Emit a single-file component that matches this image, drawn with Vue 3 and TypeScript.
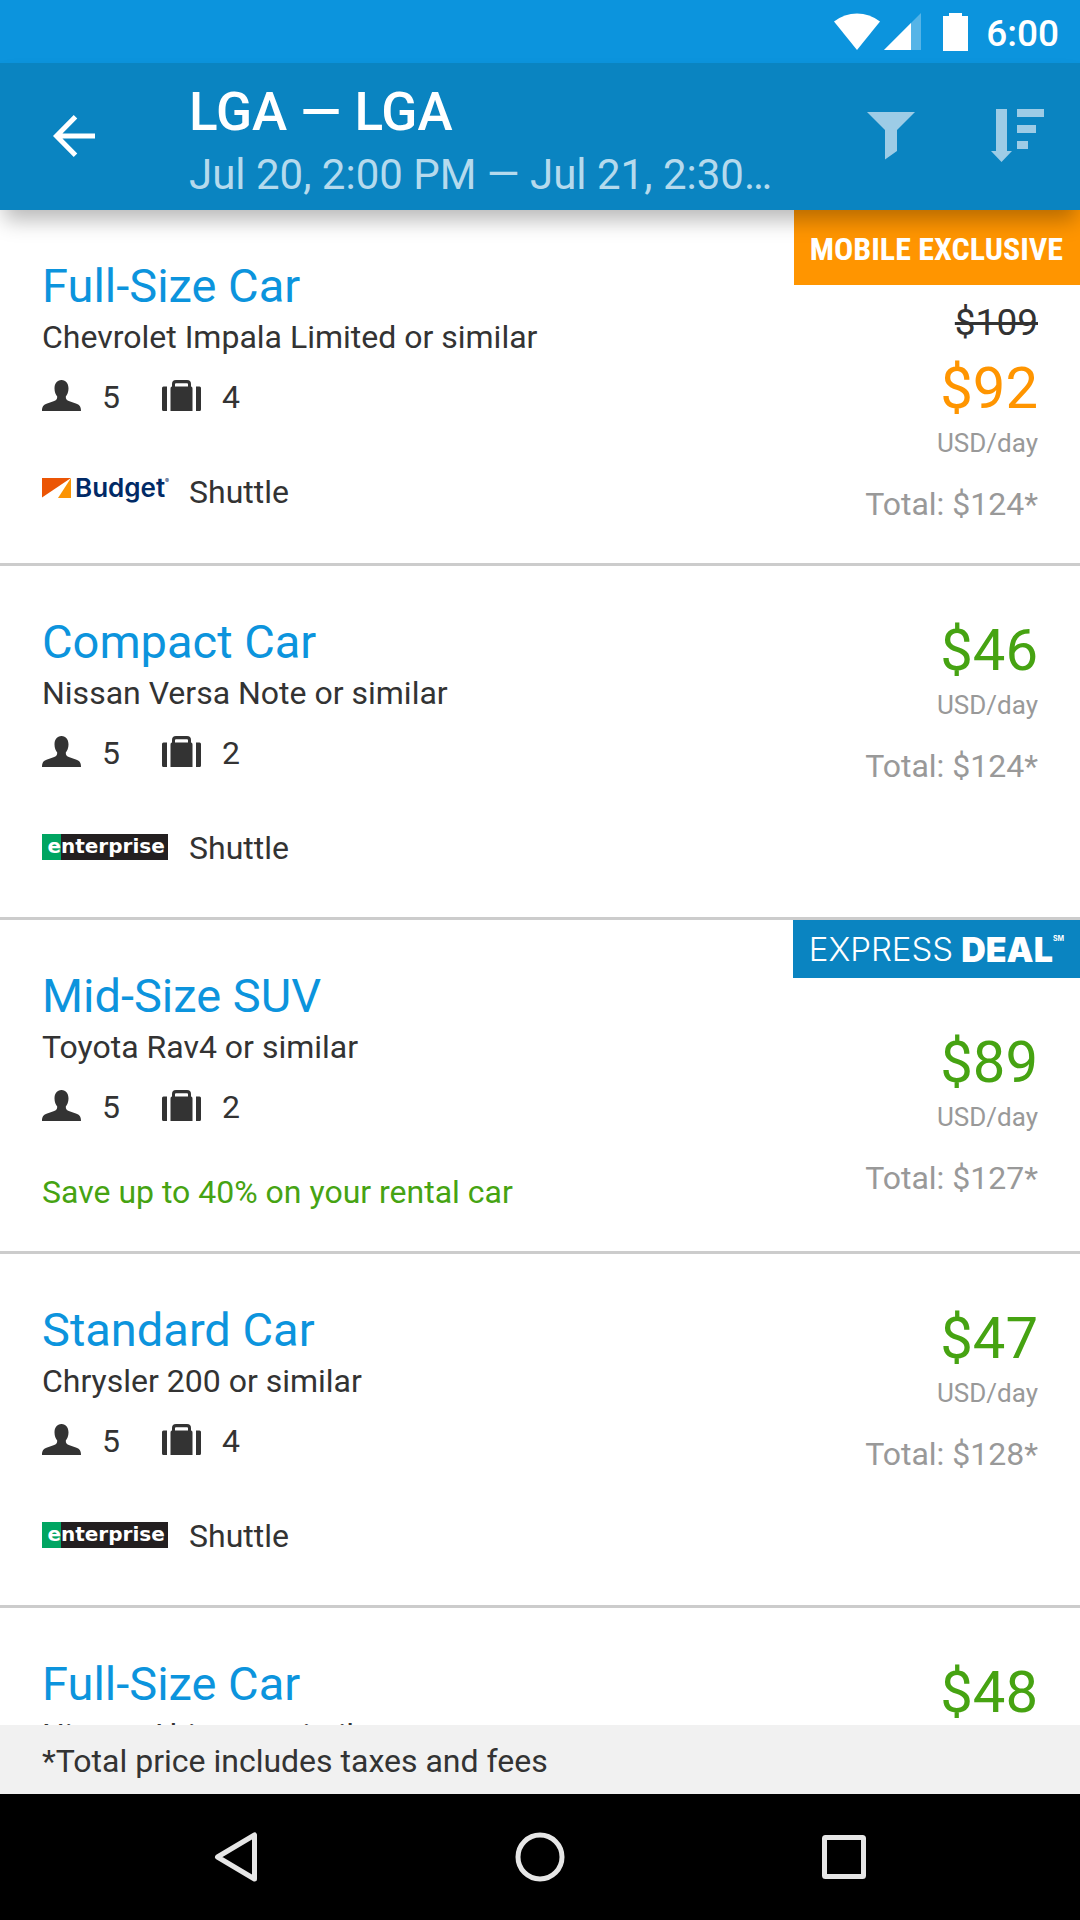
<script setup lang="ts">
interface Offer {
  id: number
  title: string
  car: string
  seats: number
  bags: number
  vendor?: 'budget' | 'enterprise'
  note?: string
  badge?: 'mobile' | 'express'
  oldPrice?: string
  price: string
  total: string
}

const offers: Offer[] = [
  { id: 1, title: 'Full-Size Car', car: 'Chevrolet Impala Limited or similar', seats: 5, bags: 4, vendor: 'budget', badge: 'mobile', oldPrice: '$109', price: '$92', total: '$124*' },
  { id: 2, title: 'Compact Car', car: 'Nissan Versa Note or similar', seats: 5, bags: 2, vendor: 'enterprise', price: '$46', total: '$124*' },
  { id: 3, title: 'Mid-Size SUV', car: 'Toyota Rav4 or similar', seats: 5, bags: 2, note: 'Save up to 40% on your rental car', badge: 'express', price: '$89', total: '$127*' },
  { id: 4, title: 'Standard Car', car: 'Chrysler 200 or similar', seats: 5, bags: 4, vendor: 'enterprise', price: '$47', total: '$128*' },
  { id: 5, title: 'Full-Size Car', car: 'Nissan Altima or similar', seats: 5, bags: 4, vendor: 'enterprise', price: '$48', total: '$130*' },
]
</script>

<template>
  <div class="screen">
    <div class="status">
      <svg class="wifi" width="46" height="37" viewBox="0 0 46 37" aria-hidden="true">
        <path d="M0 8.500Q10.500 .5 23 .5T46 8.500L23 37z" fill="#fff" />
      </svg>
      <svg class="signal" width="37" height="37" viewBox="0 0 37 37" aria-hidden="true">
        <path d="M0 37 37 0v37z" fill="#fff" opacity=".3" />
        <path d="M0 37 27 10v27z" fill="#fff" />
      </svg>
      <svg class="battery" width="25" height="38" viewBox="0 0 25 38" aria-hidden="true">
        <path d="M0 3h6V0h13v3h6v35H0z" fill="#fff" />
      </svg>
      <span class="clock">6:00</span>
    </div>

    <header class="bar">
      <button class="icon-btn back" type="button" aria-label="Back">
        <svg width="42" height="42" viewBox="0 0 42 42">
          <path d="M22.500 1.800 3.500 21l19 19.200M3.500 21H42" fill="none" stroke="#fff" stroke-width="5" />
        </svg>
      </button>
      <div class="trip">
        <h1>LGA — LGA</h1>
        <p>Jul 20, 2:00 PM — Jul 21, 2:30 PM</p>
      </div>
      <button class="icon-btn filter" type="button" aria-label="Filter">
        <svg width="48" height="48" viewBox="0 0 48 48">
          <path d="M0 0h48L30 18v21l-12 8.500V18z" fill="#9dcce6" />
        </svg>
      </button>
      <button class="icon-btn sort" type="button" aria-label="Sort">
        <svg width="53" height="53" viewBox="0 0 53 53">
          <path d="M5 0h11v42h5L10.500 53 0 42h5zM26 0h27v8H26zM26 16h19v8H26zM26 32h11v8H26z" fill="#9dcce6" />
        </svg>
      </button>
    </header>

    <main class="list">
      <article v-for="o in offers" :key="o.id" class="offer">
        <div class="info">
          <h2>{{ o.title }}</h2>
          <p class="text">{{ o.car }}</p>
          <div class="specs">
            <svg width="39" height="34" viewBox="0 0 39 34" aria-hidden="true">
              <path d="M19.500 0c4.600 0 7 3.600 7 8.500 0 3.500-1.300 6.200-2.700 8 0 2.500.5 3.600 3 4.500l7.700 2.800c3.200 1.200 4.500 3 4.500 7.200H0c0-4.200 1.300-6 4.500-7.200l7.700-2.800c2.500-.9 3-2 3-4.500-1.400-1.800-2.700-4.500-2.700-8C12.500 3.600 14.900 0 19.500 0z" fill="#333" />
            </svg>
            <span class="text count">{{ o.seats }}</span>
            <svg width="39" height="34" viewBox="0 0 39 34" aria-hidden="true">
              <path d="M1.500 6.500H5V31H1.500Q0 31 0 29.500V8q0-1.500 1.500-1.500zM34 6.500h3.500Q39 6.500 39 8v21.500q0 1.500-1.500 1.500H34zM8.500 8.500q0-2 1.500-2V4q0-4 4-4h11q4 0 4 4v2.500q1.500 0 1.500 2V31h-22zM13 6.500h13V4.300q0-1-1-1H14q-1 0-1 1z" fill="#333" fill-rule="evenodd" />
            </svg>
            <span class="text">{{ o.bags }}</span>
          </div>
          <div v-if="o.vendor" class="vendor">
            <div v-if="o.vendor === 'budget'" class="logo budget">
              <svg width="29" height="20" viewBox="0 0 29 20" aria-hidden="true">
                <path d="M0 0h29L0 19.500z" fill="#eb5505" />
                <path d="M29 0v20H16z" fill="#fb9405" />
              </svg>
              <span>Budget</span><sup>®</sup>
            </div>
            <div v-else class="logo enterprise"><span class="initial">e</span><span>nterprise</span></div>
            <span class="text">Shuttle</span>
          </div>
          <p v-else class="text note">{{ o.note }}</p>
        </div>
        <div class="cost">
          <div v-if="o.badge === 'mobile'" class="badge mobile">MOBILE EXCLUSIVE</div>
          <div v-if="o.badge === 'express'" class="badge express"><span>EXPRESS</span><b>DEAL</b><sup>SM</sup></div>
          <s v-if="o.oldPrice" class="old">{{ o.oldPrice }}</s>
          <strong class="price" :class="{ sale: o.oldPrice }">{{ o.price }}</strong>
          <span class="unit">USD/day</span>
          <span class="total">Total: {{ o.total }}</span>
        </div>
      </article>
    </main>

    <footer class="fine text">*Total price includes taxes and fees</footer>

    <nav class="nav">
      <button type="button" aria-label="System back">
        <svg width="50" height="50" viewBox="0 0 50 50"><path d="M43.500 3v44L6.500 25z" fill="none" stroke="#e6e6e6" stroke-width="5" stroke-linejoin="round" /></svg>
      </button>
      <button type="button" aria-label="Home">
        <svg width="50" height="50" viewBox="0 0 50 50"><circle cx="25" cy="25" r="22" fill="none" stroke="#e6e6e6" stroke-width="5" /></svg>
      </button>
      <button type="button" aria-label="Recent apps">
        <svg width="50" height="50" viewBox="0 0 50 50"><rect x="5.500" y="5.500" width="39" height="39" rx="1" fill="none" stroke="#e6e6e6" stroke-width="5" /></svg>
      </button>
    </nav>
  </div>
</template>

<style>
body {
  margin: 0;
}
</style>

<style scoped>
.screen {
  height: 100vh;
  display: flex;
  flex-direction: column;
  background: #fff;
  color: #333;
  font-family: Roboto, sans-serif;
}

h1,
h2,
p {
  margin: 0;
  font-weight: 400;
}

svg {
  display: block;
  flex: none;
}

button {
  display: flex;
  align-items: center;
  justify-content: center;
  padding: 0;
  border: 0;
  background: none;
}

.status {
  flex: none;
  display: flex;
  align-items: center;
  justify-content: flex-end;
  height: 63px;
  padding-right: 21px;
  background: #0c94dd;
  color: #fff;
}

.signal {
  margin-left: 4px;
}

.battery {
  margin-left: 22px;
}

.clock {
  margin-left: 18px;
  font-size: 37px;
  font-weight: 500;
  line-height: 44px;
  padding-top: 4px;
}

.bar {
  flex: none;
  position: relative;
  z-index: 1;
  display: flex;
  align-items: center;
  height: 147px;
  background: #0a84c1;
  box-shadow: 0 14px 20px -4px rgba(0, 0, 0, 0.28);
}

.icon-btn {
  flex: none;
  width: 126px;
  height: 147px;
  padding-bottom: 2px;
}

.back {
  width: 148px;
}

.trip {
  flex: 1;
  min-width: 0;
  margin-left: 41px;
  padding: 6px 48px 0 0;
}

.trip h1 {
  color: #fff;
  font-size: 53px;
  font-weight: 500;
  line-height: 70px;
}

.trip p {
  overflow: hidden;
  color: #b5daed;
  font-size: 42px;
  line-height: 56px;
  white-space: nowrap;
  text-overflow: ellipsis;
}

.list {
  flex: 1;
  min-height: 0;
  overflow-y: auto;
  scrollbar-width: none;
}

.offer {
  display: flex;
  justify-content: space-between;
  border-bottom: 3px solid #ccc;
}

.info {
  padding: 46px 0 47px 42px;
}

.info h2 {
  color: #0c94dd;
  font-size: 47px;
  line-height: 59px;
}

.text {
  font-size: 32px;
  line-height: 44px;
}

.specs {
  display: flex;
  align-items: center;
  margin-top: 16px;
}

.specs svg {
  margin-right: 21px;
}

.count {
  width: 39px;
  margin-right: 21px;
}

.vendor {
  display: flex;
  align-items: center;
  margin-top: 51px;
}

.logo {
  display: flex;
  width: 126px;
  height: 26px;
  margin: 0 21px 3px 0;
}

.budget {
  gap: 4px;
  color: #012a66;
  font-family: Inter, sans-serif;
  font-size: 26px;
  font-weight: 600;
  line-height: 20px;
}

.budget sup {
  margin-left: -4px;
  font-size: 6px;
  line-height: 6px;
}

.enterprise {
  background: #231f20;
  color: #fff;
  font-family: "DejaVu Sans", sans-serif;
  font-size: 20px;
  font-weight: 700;
  line-height: 24px;
}

.initial {
  width: 19px;
  background: #00a562;
  text-align: right;
}

.note {
  margin: 41px 0 -10px;
  color: #46a312;
}

.cost {
  display: flex;
  flex-direction: column;
  align-items: flex-end;
  padding: 0 42px 37px 0;
}

.badge {
  display: flex;
  align-items: center;
  margin-right: -42px;
  color: #fff;
  white-space: nowrap;
}

.mobile {
  height: 73px;
  padding: 2px 17px 0 16px;
  background: #ff9500;
  font-family: "Roboto Condensed", "Liberation Sans Narrow", Roboto, sans-serif;
  font-size: 32px;
  font-weight: 700;
}

.express {
  height: 58px;
  padding: 0 16px;
  background: #0a84c1;
  font-family: Inter, sans-serif;
  font-size: 33px;
  font-weight: 300;
}

.express b {
  margin-left: 8px;
  font-size: 34px;
  font-weight: 900;
}

.express sup {
  align-self: flex-start;
  margin-top: 14px;
  font-size: 7px;
  font-weight: 700;
  line-height: 10px;
}

.old {
  margin-top: 12px;
  font-size: 37px;
  line-height: 52px;
}

.price {
  margin-top: 49px;
  color: #46a312;
  font-size: 58px;
  font-weight: 400;
  line-height: 70px;
}

.sale {
  margin-top: 4px;
  color: #ff9500;
}

.unit {
  color: #999;
  font-size: 26px;
  line-height: 40px;
}

.total {
  margin-top: 19px;
  color: #999;
  font-size: 32px;
  line-height: 44px;
}

.fine {
  flex: none;
  padding: 14px 42px 11px;
  background: #f1f1f1;
}

.nav {
  flex: none;
  display: flex;
  justify-content: center;
  height: 126px;
  background: #000;
}

.nav button {
  width: 304px;
}
</style>
